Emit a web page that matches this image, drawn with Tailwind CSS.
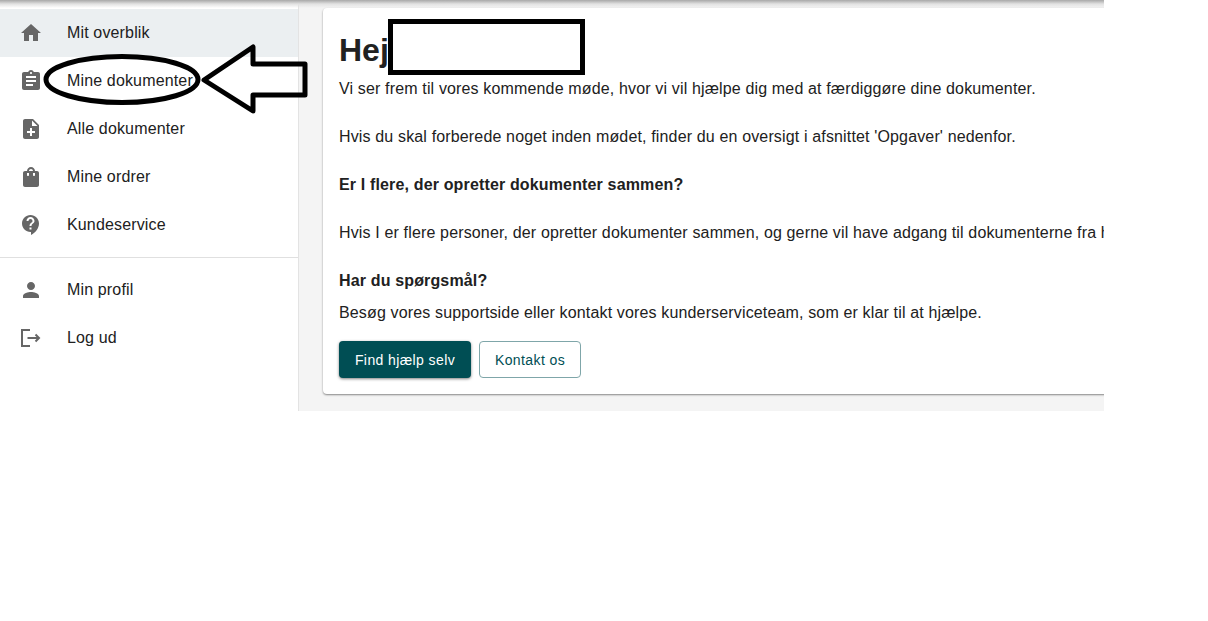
<!DOCTYPE html>
<html lang="en">
<head>
    <meta charset="UTF-8">
    <meta name="viewport" content="width=device-width, initial-scale=1.0">
    <title>Mit overblik</title>
    <script src="https://cdn.jsdelivr.net/npm/@tailwindcss/browser@4"></script>
</head>
<body class="bg-white h-[621px] overflow-hidden font-['Liberation_Sans',Arial,sans-serif] text-[#212121]">
    <div class="relative w-[1104px] h-[411px] overflow-hidden flex bg-[#f4f4f4]">
        <!-- top bar shadow -->
        <div class="absolute top-0 left-0 right-0 h-[8px] bg-gradient-to-b from-[#a8a8a8] via-[#e2e2e2] to-[#f4f4f4]/0"></div>

        <!-- sidebar -->
        <nav class="w-[299px] shrink-0 bg-white border-r border-[#e3e3e3] pt-[9px] text-base tracking-[0.15px]">
            <a class="flex items-center h-12 bg-[#ebeff1]">
                <span class="w-[67px] flex justify-center pr-[5px]">
                    <svg class="w-6 h-6" viewBox="0 0 24 24" fill="#666"><path d="M10 20v-6h4v6h5v-8h3L12 3 2 12h3v8z"/></svg>
                </span>
                Mit overblik
            </a>
            <a class="flex items-center h-12">
                <span class="w-[67px] flex justify-center pr-[5px]">
                    <svg class="w-6 h-6" viewBox="0 0 24 24" fill="#666"><path d="M19 3h-4.18C14.4 1.84 13.3 1 12 1s-2.4.84-2.82 2H5c-1.1 0-2 .9-2 2v14c0 1.1.9 2 2 2h14c1.1 0 2-.9 2-2V5c0-1.1-.9-2-2-2zm-7 0c.55 0 1 .45 1 1s-.45 1-1 1-1-.45-1-1 .45-1 1-1zm2 14H7v-2h7v2zm3-4H7v-2h10v2zm0-4H7V7h10v2z"/></svg>
                </span>
                Mine dokumenter
            </a>
            <a class="flex items-center h-12">
                <span class="w-[67px] flex justify-center pr-[5px]">
                    <svg class="w-6 h-6" viewBox="0 0 24 24" fill="#666"><path d="M14 2H6c-1.1 0-2 .9-2 2v16c0 1.1.9 2 2 2h12c1.1 0 2-.9 2-2V8l-6-6zm2 14h-3v3h-2v-3H8v-2h3v-3h2v3h3v2zm-3-7V3.5L18.5 9H13z"/></svg>
                </span>
                Alle dokumenter
            </a>
            <a class="flex items-center h-12">
                <span class="w-[67px] flex justify-center pr-[5px]">
                    <svg class="w-6 h-6" viewBox="0 0 24 24" fill="#666"><path d="M18 6h-2c0-2.21-1.79-4-4-4S8 3.79 8 6H6c-1.1 0-2 .9-2 2v12c0 1.1.9 2 2 2h12c1.1 0 2-.9 2-2V8c0-1.1-.9-2-2-2zm-8 4c0 .55-.45 1-1 1s-1-.45-1-1V8h2v2zm2-6c1.1 0 2 .9 2 2h-4c0-1.1.9-2 2-2zm4 6c0 .55-.45 1-1 1s-1-.45-1-1V8h2v2z"/></svg>
                </span>
                Mine ordrer
            </a>
            <a class="flex items-center h-12">
                <span class="w-[67px] flex justify-center pr-[5px]">
                    <svg class="w-6 h-6" viewBox="0 0 24 24" fill="#666"><path d="M11.5 2C6.81 2 3 5.81 3 10.5S6.81 19 11.5 19h.5v3c4.86-2.34 8-7 8-11.5C20 5.81 16.19 2 11.5 2zm1 14.5h-2v-2h2v2zm0-3.5h-2c0-3.25 3-3 3-5 0-1.1-.9-2-2-2s-2 .9-2 2h-2c0-2.21 1.79-4 4-4s4 1.79 4 4c0 2.5-3 2.75-3 5z"/></svg>
                </span>
                Kundeservice
            </a>
            <div class="my-2 border-t border-[#e0e0e0]"></div>
            <a class="flex items-center h-12">
                <span class="w-[67px] flex justify-center pr-[5px]">
                    <svg class="w-6 h-6" viewBox="0 0 24 24" fill="#666"><path d="M12 12c2.21 0 4-1.79 4-4s-1.79-4-4-4-4 1.79-4 4 1.79 4 4 4zm0 2c-2.67 0-8 1.34-8 4v2h16v-2c0-2.66-5.33-4-8-4z"/></svg>
                </span>
                Min profil
            </a>
            <a class="flex items-center h-12">
                <span class="w-[67px] flex justify-center pr-[5px]">
                    <svg class="w-6 h-6" viewBox="0 0 24 24" fill="none" stroke="#666" stroke-width="2"><path d="M11 4H3v16h8M8.5 12h11.5M16.5 8.5l3.5 3.5-3.5 3.5"/></svg>
                </span>
                Log ud
            </a>
        </nav>

        <!-- main card -->
        <main class="pl-6 pt-2 min-w-0 flex-1">
            <section class="w-[1000px] h-[386px] bg-white rounded-[4px] shadow-[0_1px_2px_rgba(0,0,0,0.45)] p-4 text-base leading-6 tracking-[0.15px] whitespace-nowrap">
                <h1 class="text-[32px] leading-[52px] font-bold h-[53px] tracking-normal">Hej</h1>
                <p>Vi ser frem til vores kommende møde, hvor vi vil hjælpe dig med at færdiggøre dine dokumenter.</p>
                <p class="mt-6">Hvis du skal forberede noget inden mødet, finder du en oversigt i afsnittet 'Opgaver' nedenfor.</p>
                <p class="mt-6 font-bold">Er I flere, der opretter dokumenter sammen?</p>
                <p class="mt-6">Hvis I er flere personer, der opretter dokumenter sammen, og gerne vil have adgang til dokumenterne fra hinanden, kan I kontakte os.</p>
                <p class="mt-6 font-bold">Har du spørgsmål?</p>
                <p class="mt-2">Besøg vores supportside eller kontakt vores kunderserviceteam, som er klar til at hjælpe.</p>
                <div class="flex gap-2 mt-4">
                    <button class="w-[132px] h-[37px] rounded-[4px] bg-[#004e54] text-white text-sm tracking-[0.4px] shadow-[0_1px_3px_rgba(0,0,0,0.5)]">Find hjælp selv</button>
                    <button class="w-[102px] h-[37px] rounded-[4px] border border-[#7fa6a9] bg-white text-[#004e54] text-sm tracking-[0.4px]">Kontakt os</button>
                </div>
            </section>
        </main>
    </div>

    <!-- hand drawn annotations on top of the screenshot -->
    <svg class="absolute top-0 left-0" width="1208" height="621" fill="none" stroke="#000">
        <rect x="390.5" y="21.5" width="192" height="51" fill="#fff" stroke-width="5"/>
        <ellipse cx="122" cy="79.5" rx="76" ry="23" stroke-width="5"/>
        <path d="M204 80 L253 47 L253 64 L305 64 L305 95 L253 95 L253 111 Z" stroke-width="5" stroke-linejoin="round"/>
    </svg>
</body>
</html>
